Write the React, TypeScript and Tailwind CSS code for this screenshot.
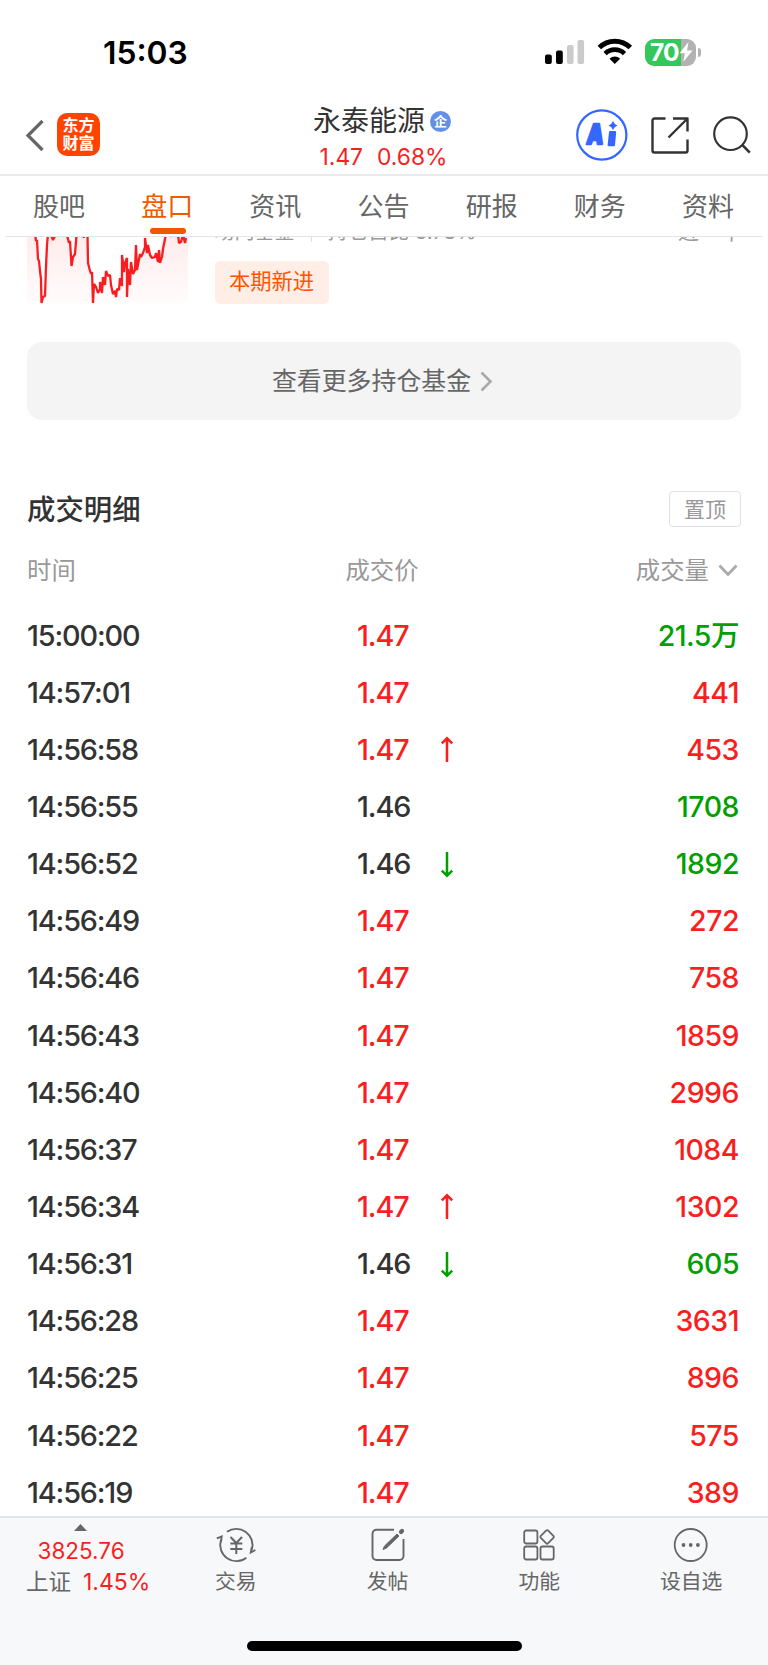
interface Trade {
  time: string;
  price: string;
  volume: string;
  side: "buy" | "sell";
  move?: "up" | "down";
}

const tabs = ["股吧", "盘口", "资讯", "公告", "研报", "财务", "资料"];

const trades: Trade[] = [
  { time: "15:00:00", price: "1.47", volume: "21.5万", side: "sell" },
  { time: "14:57:01", price: "1.47", volume: "441", side: "buy" },
  { time: "14:56:58", price: "1.47", volume: "453", side: "buy", move: "up" },
  { time: "14:56:55", price: "1.46", volume: "1708", side: "sell" },
  { time: "14:56:52", price: "1.46", volume: "1892", side: "sell", move: "down" },
  { time: "14:56:49", price: "1.47", volume: "272", side: "buy" },
  { time: "14:56:46", price: "1.47", volume: "758", side: "buy" },
  { time: "14:56:43", price: "1.47", volume: "1859", side: "buy" },
  { time: "14:56:40", price: "1.47", volume: "2996", side: "buy" },
  { time: "14:56:37", price: "1.47", volume: "1084", side: "buy" },
  { time: "14:56:34", price: "1.47", volume: "1302", side: "buy", move: "up" },
  { time: "14:56:31", price: "1.46", volume: "605", side: "sell", move: "down" },
  { time: "14:56:28", price: "1.47", volume: "3631", side: "buy" },
  { time: "14:56:25", price: "1.47", volume: "896", side: "buy" },
  { time: "14:56:22", price: "1.47", volume: "575", side: "buy" },
  { time: "14:56:19", price: "1.47", volume: "389", side: "buy" },
];

function StatusBar() {
  return (
    <div className="flex h-[100px] items-start justify-between pl-[103px] pr-[67px] pt-[33px]">
      <span className="text-[31.8px] font-semibold leading-[40px] text-black">15:03</span>
      <div className="flex pt-[5px]">
        <svg className="mt-px" width="40" height="27" viewBox="0 0 40 27">
          <rect x="0" y="15.5" width="6.8" height="9.5" rx="2" fill="#000" />
          <rect x="11" y="11.5" width="6.8" height="13.5" rx="2" fill="#000" />
          <rect x="22" y="6" width="6.6" height="19" rx="2" fill="#cbcbcb" />
          <rect x="32.5" y="1" width="6.6" height="24" rx="2" fill="#cbcbcb" />
        </svg>
        <svg className="ml-[12px] mr-px" width="36" height="27" viewBox="0 0 36 27" fill="none" stroke="#000">
          <path d="M2.3 9.6a22 22 0 0 1 31 0" strokeWidth="5" />
          <path d="M8.1 15.6a13.9 13.9 0 0 1 19.4 0" strokeWidth="4.6" />
          <path d="M17.8 26l-5.3-5.3a7.7 7.7 0 0 1 10.6 0z" fill="#000" stroke="none" />
        </svg>
        <div className="ml-[11px] flex items-center">
          <div className="flex h-[27px] w-[51px] items-center rounded-[9px] bg-[linear-gradient(90deg,#34c759_70%,#b2b2b2_70%)] pl-[5px]">
            <span className="w-[29px] text-[24.5px] font-bold leading-none tracking-[-0.8px] text-white">70</span>
            <svg width="14" height="20" viewBox="0 0 14 20" fill="#fff">
              <path d="M9.5 0L.5 11.2h5.5L4.2 20L13.5 8.5H8z" />
            </svg>
          </div>
          <div className="ml-[2px] h-[9px] w-[3px] rounded-r-full bg-[#b2b2b2]" />
        </div>
      </div>
    </div>
  );
}

function Header() {
  return (
    <div className="flex h-[76px] border-b-2 border-[#ebebeb] pt-px">
      <div className="flex w-[268px] pl-[25px] pt-[12px]">
        <svg className="mt-[6px]" width="20" height="33" viewBox="0 0 20 33" fill="none" stroke="#666" strokeWidth="3.2">
          <path d="M17.5 2L3 16.5L17.5 31" />
        </svg>
        <div className="ml-[12px] flex h-[43px] w-[43px] flex-col items-center justify-center rounded-[10px] bg-[#ff4400] text-[16px] font-bold leading-[17.5px] text-white">
          <span>东方</span>
          <span>财富</span>
        </div>
      </div>

      <div className="w-[230px] pt-px">
        <div className="flex h-[38px] items-center justify-center pr-[2px]">
          <span className="text-[28px] leading-[38px] text-[#333]">永泰能源</span>
          <span className="ml-[5px] flex h-[21px] w-[21px] items-center justify-center rounded-full bg-[#648fe8] text-[13px] font-bold leading-none text-white">
            企
          </span>
        </div>
        <div className="flex h-[34px] items-center justify-center gap-[14px] pl-px text-[22.8px] leading-[34px] text-[#f81f1f]">
          <span>1.47</span>
          <span>0.68%</span>
        </div>
      </div>

      <div className="flex flex-1 pl-[77px] pt-[8px]">
        <svg width="54" height="54" viewBox="0 0 54 54" fill="none">
          <circle cx="26.8" cy="26" r="24.6" stroke="#3467ff" strokeWidth="2.2" />
          <text
            transform="translate(11 35.2) skewX(-6) scale(.76 1)"
            fontSize="27.5"
            fontWeight="900"
            fill="#3467ff"
            stroke="#3467ff"
            strokeWidth="2.4"
            strokeLinejoin="round"
            fontFamily="Inter"
          >
            A
          </text>
          <path d="M35 23h5.2l-1.2 13.2h-5.4z" fill="#3467ff" stroke="#3467ff" strokeWidth="2" strokeLinejoin="round" />
          <path d="M38 12q1.200 3.300 4.500 4.500q-3.300 1.200-4.500 4.500q-1.200-3.300-4.500-4.500q3.300-1.200 4.500-4.500z" fill="#3467ff" />
        </svg>
        <svg className="ml-[21px] mt-[7px]" width="40" height="40" viewBox="0 0 40 40" fill="none" stroke="#333" strokeWidth="2.4" strokeLinejoin="round">
          <path d="M15.5 2.5H4.5a2 2 0 0 0-2 2v30a2 2 0 0 0 2 2h31a2 2 0 0 0 2-2V23.5" />
          <path d="M23 2.5h14.5v13M37 3L18.5 21.5" />
        </svg>
        <svg className="ml-[21px] mt-[7px]" width="40" height="40" viewBox="0 0 40 40" fill="none" stroke="#333" strokeWidth="2.2">
          <circle cx="19.5" cy="17.7" r="16.3" />
          <path d="M31 28.7L38.8 36.7" strokeWidth="2.6" />
        </svg>
      </div>
    </div>
  );
}

function Tabs() {
  return (
    <div className="mx-[5px] grid h-[61px] grid-cols-7 border-b border-[#e4e4e6] pr-px">
      {tabs.map((tab) => (
        <div key={tab} className="flex flex-col items-center pt-[15px]">
          <span
            className={
              tab === "盘口"
                ? "text-[26px] leading-[32px] text-[#f05a00]"
                : "text-[26px] leading-[32px] text-[#666]"
            }
          >
            {tab}
          </span>
          {tab === "盘口" && <div className="ml-[2px] mt-[5px] h-[6px] w-[36px] shrink-0 rounded-[3px] bg-[#f05500]" />}
        </div>
      ))}
    </div>
  );
}

function FundSection() {
  return (
    <div className="h-[105px] overflow-hidden px-[27px]">
      <div className="flex">
        <svg width="161" height="70" viewBox="0 0 161 70">
          <defs>
            <linearGradient id="area" x1="0" y1="0" x2="0" y2="1">
              <stop offset="0" stopColor="#ffecec" />
              <stop offset="1" stopColor="#fffcfc" />
            </linearGradient>
          </defs>
          <path
            d="M0 0H8L12 35L15 66L19 36L21 0H40L45 28L49 0H61L62 28L66 66L72 57L79 38L87 58L92 41L97 26L100 48L107 36L112 24L119 10L129 20L137 0H161V66H0z"
            fill="url(#area)"
          />
          <path
            d="M8 -3L9 4L10 3L11 22L12 24L13 34L14 42L14.5 66L16 60L18 59L19 30L20 8L21 -3M24 -2L26 3L28 -1M40 -2L42 6L43 4L44.5 29L46 20L48 17L49.5 -2M56 -3L57 1M60.5 -3L61 26L62.5 32L64 37L65 35L66 66L67 47L69 50L71 56L73 52L73 45L75 56L76 40L78 48L79 34L81 39L83 38L84 48L86 57L88 54L89 60L90 52L92 53L93 41L95 49L95 18L97 35L98 26L100 21L100 60L101 32L103 48L104 25L106 37L108 33L109 8L110 33L113 17L114 20L116 16L118 10L118 1L120 16L121 8L123 18L125 21L128 20L129 16L131 25L132 13L133 26L135 20L136 12L139 -3M144 -2L145 0M151 -3L152 6L154 5L156 -2L158 6L159 1"
            fill="none"
            stroke="#f91d20"
            strokeWidth="2.3"
            strokeLinejoin="bevel"
          />
        </svg>
        <div className="ml-[26.5px] flex-1">
          <div className="-mt-[20px] flex h-[30px] items-center text-[20px] leading-[30px] text-[#999]">
            <span>场内基金</span>
            <span className="mx-[16px] h-[20px] w-px bg-[#ddd]" />
            <span className="text-[20.5px] tracking-[-0.1px]">持仓占比 3.78%</span>
            <span className="ml-auto text-[21px]">近一年</span>
          </div>
          <div className="mt-[13.5px] flex h-[43px] w-[114px] items-center justify-center rounded-[5px] bg-[#ffeee6] text-[21.3px] leading-none text-[#ff5500]">
            本期新进
          </div>
        </div>
      </div>
    </div>
  );
}

function MoveArrow({ move }: { move: "up" | "down" }) {
  return (
    <svg
      className={move === "up" ? "text-[#f81f1f]" : "rotate-180 text-[#00a000]"}
      width="14"
      height="27"
      viewBox="0 0 14 27"
      fill="none"
      stroke="currentColor"
      strokeWidth="2.5"
    >
      <path d="M7 26V2M1.8 7.3L7 2.3L12.2 7.3" />
    </svg>
  );
}

function TradeTable() {
  return (
    <div className="px-[27px]">
      <div className="mt-[71px] flex h-[36px] items-center justify-between">
        <h2 className="pt-[2px] text-[28.4px] font-medium leading-[36px] text-[#333]">成交明细</h2>
        <button className="flex h-[36px] w-[72px] items-center justify-center rounded-[4px] border-[1.5px] border-[#e0e0e8] text-[21px] leading-none text-[#999]">
          置顶
        </button>
      </div>

      <div className="mt-[25px] grid h-[36px] grid-cols-[1fr_120px_1fr] items-center text-[24.4px] leading-[36px] text-[#999]">
        <span>时间</span>
        <span className="pr-[4px] text-center">成交价</span>
        <span className="flex items-center justify-end pr-[3px]">
          成交量
          <svg className="ml-[9px]" width="20" height="13" viewBox="0 0 20 13" fill="none" stroke="#aaa" strokeWidth="2.8">
            <path d="M1.5 1.5L10 10.5L18.5 1.5" />
          </svg>
        </span>
      </div>

      <div className="mt-[19px]">
        {trades.map((t) => (
          <div
            key={t.time}
            className="grid h-[57.15px] grid-cols-[1fr_54px_1fr] items-center text-[28.8px] font-medium leading-[40px] tracking-[-1.15px] text-[#333]"
          >
            <span>{t.time}</span>
            <span className={t.price === "1.47" ? "pr-[4px] text-center text-[#f81f1f]" : "pr-[4px] text-center"}>{t.price}</span>
            <div className="flex items-center justify-between pl-[29px] pr-[2px]">
              <span>{t.move && <MoveArrow move={t.move} />}</span>
              <span
                className={
                  t.side === "buy"
                    ? "text-[28.5px] tracking-[-0.5px] text-[#f81f1f]"
                    : "text-[28.5px] tracking-[-0.5px] text-[#00a000]"
                }
              >
                {t.volume}
              </span>
            </div>
          </div>
        ))}
      </div>
    </div>
  );
}

const actions = [
  {
    label: "交易",
    icon: (
      <svg width="42" height="36" viewBox="-1 0 42 36" fill="none" stroke="#666" strokeWidth="1.9">
        <path d="M11 4.8A16.2 16.2 0 0 1 35.8 22.8M30.4 30.7A16.2 16.2 0 0 1 5 12.9" />
        <path d="M.8 11.3L5.7 9.5L5 15M39.4 23L34.8 25.5L35.7 20.5" />
        <path d="M14.5 10L20.3 16L26 10M14.3 16.5h12M14.3 22h12M20.3 16v11" strokeWidth="2" />
      </svg>
    ),
  },
  {
    label: "发帖",
    icon: (
      <svg width="40" height="36" viewBox="0 0 40 36" fill="none" stroke="#666" strokeWidth="1.9">
        <path d="M26 2.7H8.5a4 4 0 0 0-4 4V29a4 4 0 0 0 4 4h23a4 4 0 0 0 4-4V12" />
        <path d="M15 22.5L16.5 19L29 7L31 9L18.5 21z" fill="#666" strokeWidth="1" strokeLinejoin="round" />
        <path d="M33 5L34 4" strokeWidth="4.2" strokeLinecap="round" />
      </svg>
    ),
  },
  {
    label: "功能",
    icon: (
      <svg width="40" height="36" viewBox="0 0 40 36" fill="none" stroke="#666" strokeWidth="1.8" strokeLinejoin="round">
        <rect x="5.2" y="3.5" width="13.2" height="13" rx="2" />
        <rect x="5.2" y="19.5" width="13.2" height="13" rx="2" />
        <rect x="21.5" y="19.5" width="13.2" height="13" rx="2" />
        <rect x="22.9" y="4.7" width="10.4" height="10.4" rx="1.5" transform="rotate(45 28.1 9.9)" />
      </svg>
    ),
  },
  {
    label: "设自选",
    icon: (
      <svg width="40" height="36" viewBox="0 0 40 36" fill="none" stroke="#666" strokeWidth="1.8">
        <circle cx="19.7" cy="18" r="16" />
        <g fill="#666" stroke="none">
          <circle cx="12.5" cy="18" r="1.9" />
          <circle cx="19.7" cy="18" r="1.9" />
          <circle cx="26.9" cy="18" r="1.9" />
        </g>
      </svg>
    ),
  },
];

function BottomBar() {
  return (
    <div className="flex h-[149px] shrink-0 flex-col border-t-2 border-[#e3e3ea] bg-[#f7f8fa]">
      <div className="flex h-[123px]">
        <div className="w-[160px] pl-[26px] text-[22.5px] text-[#f81f1f]">
          <svg className="ml-[48px] mt-[6px]" width="13" height="7" viewBox="0 0 13 7" fill="#666">
            <path d="M0 7L6.5 0L13 7z" />
          </svg>
          <div className="ml-[11.5px] mt-[4px] leading-[32px]">3825.76</div>
          <div className="flex items-center leading-[30px]">
            <span className="text-[#666]">上证</span>
            <span className="ml-[12px] text-[23px]">1.45%</span>
          </div>
        </div>
        <div className="grid flex-1 grid-cols-4 pr-px">
          {actions.map((action) => (
            <div key={action.label} className="flex flex-col items-center pt-[9px]">
              {action.icon}
              <span className="mt-[4px] text-[20.8px] leading-[30px] text-[#666]">{action.label}</span>
            </div>
          ))}
        </div>
      </div>
      <div className="mx-auto h-[10px] w-[275px] rounded-full bg-black" />
    </div>
  );
}

export default function App() {
  return (
    <div className="flex h-[1665px] w-[768px] flex-col overflow-hidden bg-white font-['Inter','Noto_Sans_CJK_SC',sans-serif]">
      <StatusBar />
      <Header />
      <Tabs />
      <div className="min-h-0 flex-1 overflow-hidden">
        <FundSection />
        <div className="mx-[27px] flex h-[78px] items-center justify-center rounded-[15px] bg-[#f4f4f4] pr-[3px] text-[24.9px] leading-[36px] text-[#666]">
          查看更多持仓基金
          <svg className="ml-[9px]" width="13" height="21" viewBox="0 0 13 21" fill="none" stroke="#aaa" strokeWidth="2.6">
            <path d="M1.5 1.5L10.5 10.5L1.5 19.5" />
          </svg>
        </div>
        <TradeTable />
      </div>
      <BottomBar />
    </div>
  );
}
